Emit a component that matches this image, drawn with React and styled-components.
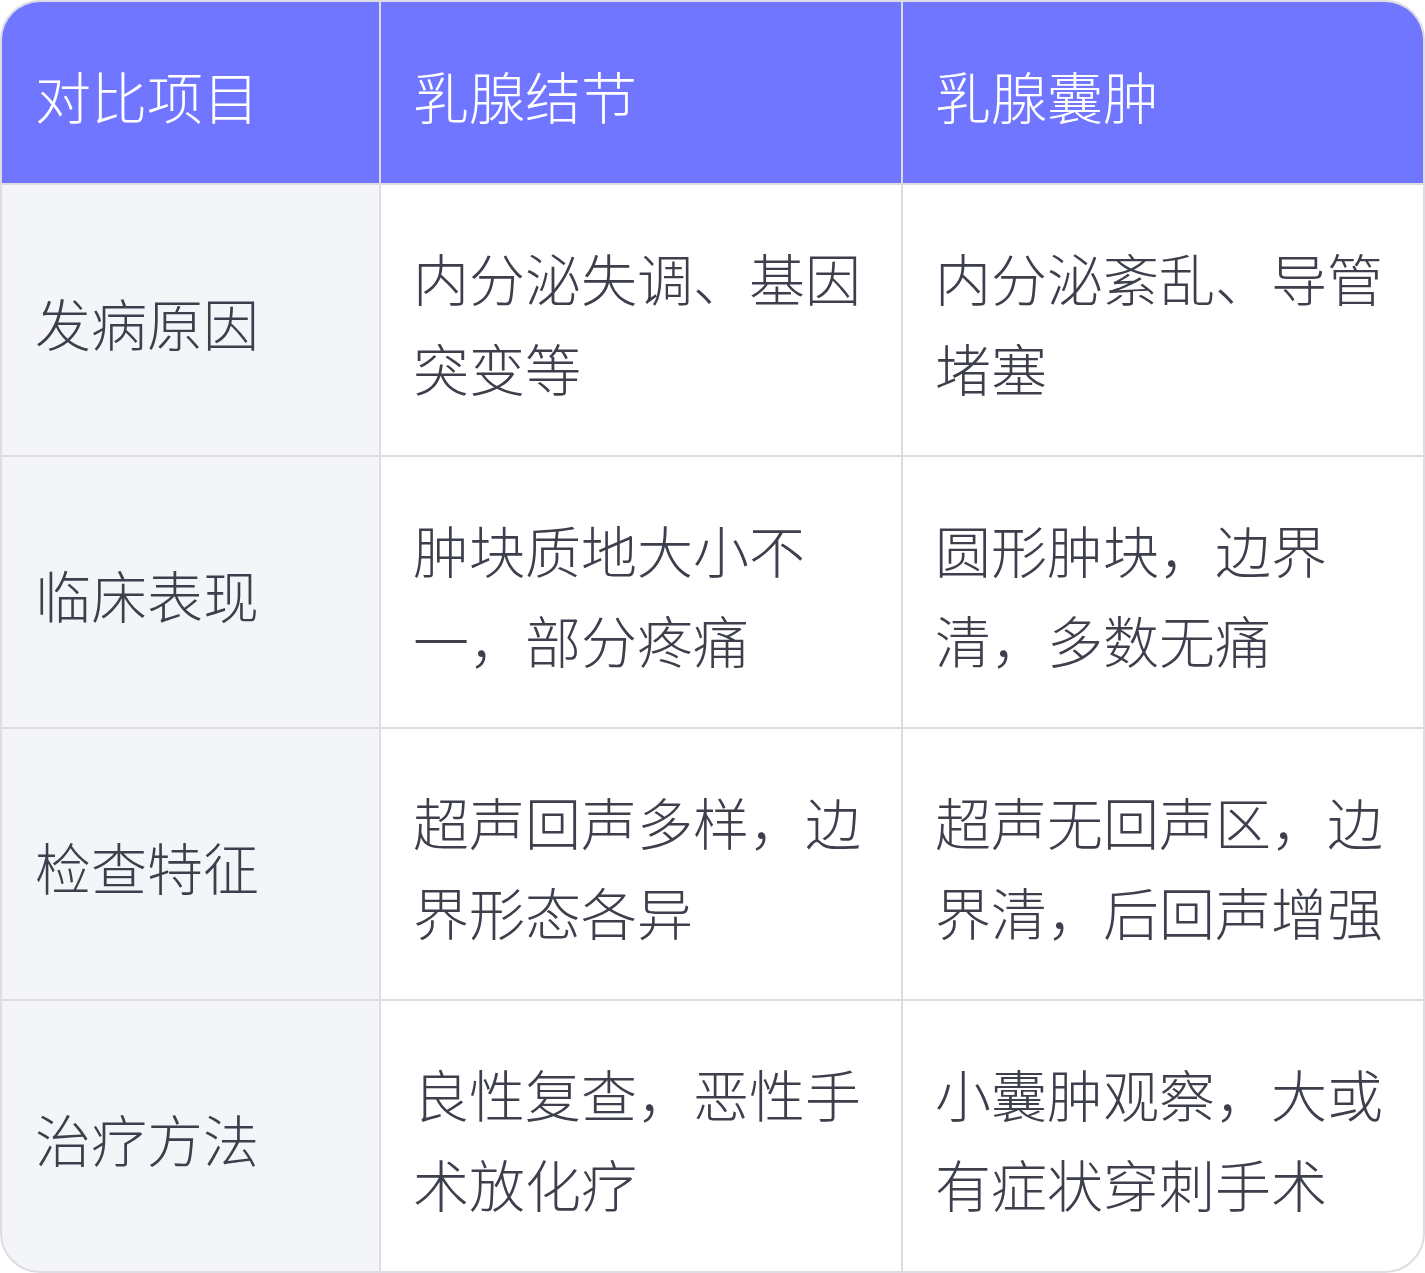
import React from "react";
import styled, { createGlobalStyle } from "styled-components";

const GlobalStyle = createGlobalStyle`
  html, body {
    margin: 0;
    padding: 0;
    background: #ffffff;
  }
  body {
    font-family: "Noto Sans CJK SC", "Noto Sans", sans-serif;
  }
`;

// ------------------------------styles---------------------------------------
const TableFrame = styled.div`
  width: 1425px;
  height: 1273px;
  box-sizing: border-box;
  border: 2px solid #dcdce2;
  border-radius: 40px;
  overflow: hidden;
`;

const Grid = styled.div`
  display: grid;
  grid-template-columns: 377px 520px 1fr;
  grid-template-rows: 181px repeat(4, 270px);
  gap: 2px;
  height: 100%;
  background: #dcdce2;
`;

const Cell = styled.div`
  display: flex;
  align-items: center;
  padding: 4px 28px 0 ${(p) => (p.first ? "33px" : "32px")};
  font-size: 56px;
  line-height: 90px;
  font-weight: 300;
  color: ${(p) => (p.head ? "#ffffff" : "#3d404c")};
  background: ${(p) =>
    p.head ? "#7076ff" : p.first ? "#f4f5f9" : "#ffffff"};
`;
// ------------------------------styles---------------------------------------

const headers = ["对比项目", "乳腺结节", "乳腺囊肿"];

const rows = [
  ["发病原因", "内分泌失调、基因突变等", "内分泌紊乱、导管堵塞"],
  ["临床表现", "肿块质地大小不一，部分疼痛", "圆形肿块，边界清，多数无痛"],
  ["检查特征", "超声回声多样，边界形态各异", "超声无回声区，边界清，后回声增强"],
  ["治疗方法", "良性复查，恶性手术放化疗", "小囊肿观察，大或有症状穿刺手术"],
];

const App = () => {
  return (
    <>
      <GlobalStyle />
      <TableFrame>
        <Grid>
          {headers.map((h, i) => (
            <Cell head first={i === 0} key={h}>
              {h}
            </Cell>
          ))}
          {rows.map((r) =>
            r.map((text, i) => (
              <Cell first={i === 0} key={r[0] + i}>
                {text}
              </Cell>
            ))
          )}
        </Grid>
      </TableFrame>
    </>
  );
};

export default App;
